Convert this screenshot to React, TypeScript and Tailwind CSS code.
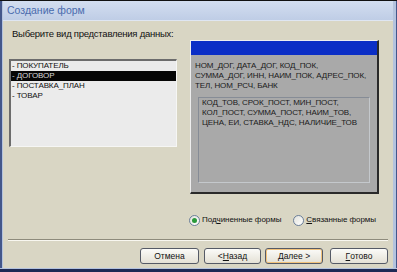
import React from "react";

const font = { fontFamily: '"Liberation Sans", Arial, sans-serif' };

function Radio({ checked, children }: { checked?: boolean; children: React.ReactNode }) {
  return (
    <div className="flex items-center gap-[2px] whitespace-nowrap">
      <div className="w-[11px] h-[11px] rounded-full border border-[#6b7f9a] bg-gradient-to-br from-[#e2e2dc] to-[#ffffff] flex items-center justify-center">
        {checked && <div className="w-[5px] h-[5px] rounded-full bg-[#2a9a3a]" />}
      </div>
      <span className="text-[8px] leading-[12px] text-[#111] tracking-[-0.05px]">{children}</span>
    </div>
  );
}

function Btn({ children, w, def }: { children: React.ReactNode; w: string; def?: boolean }) {
  return (
    <div
      className={`${w} h-[16px] rounded-[3px] border border-[#555a66] bg-gradient-to-b from-[#fbfbf8] to-[#e4e1d6] flex items-center justify-center whitespace-nowrap text-[8.5px] leading-[12px] text-[#111] ${
        def ? "shadow-[inset_0_0_0_1px_#f2c27a]" : ""
      }`}
    >
      {children}
    </div>
  );
}

export default function App() {
  return (
    <div style={font} className="w-[397px] h-[272px] bg-[#1e2a55] flex flex-col overflow-hidden">
      <div className="h-[1px] bg-[#111]" />
      <div className="flex-1 flex">
        <div className="w-[2px] bg-[#44578a]" />
        <div className="w-[1px] bg-[#b4c3de]" />
        <div className="flex-1 flex flex-col">
          <div className="h-[20px] bg-gradient-to-b from-[#d3def0] to-[#bfcde6] flex items-center pl-[4px] border-b border-[#dfe6f2]">
            <span className="text-[10.5px] leading-[13px] text-[#4a6cae]">Создание форм</span>
          </div>
          <div className="flex-1 bg-[#d9d6c4] flex flex-col">
            <div className="mt-[6px] ml-[9px] text-[9.5px] leading-[13px] text-[#111] tracking-[-0.25px] whitespace-nowrap">
              Выберите вид представления данных:
            </div>
            <div className="flex items-start">
              <div className="ml-[6px] mt-[19px] w-[168px] h-[88px] bg-[#ebebeb] border-t-2 border-l-2 border-[#6c6c6c] border-r border-b border-r-[#f6f6f4] border-b-[#f6f6f4] text-[8px] leading-[10px] text-[#111] tracking-[-0.1px]">
                <div className="pl-[1px]">- ПОКУПАТЕЛЬ</div>
                <div className="pl-[1px] bg-[#050505] text-[#d8d8d8]">- ДОГОВОР</div>
                <div className="pl-[1px]">- ПОСТАВКА_ПЛАН</div>
                <div className="pl-[1px]">- ТОВАР</div>
              </div>
              <div className="ml-[13px] w-[189px] h-[154px] bg-[#a9a9a9] border-t border-l border-[#eeeeee] border-r-2 border-b-2 border-r-[#2a2a2a] border-b-[#2a2a2a] flex flex-col">
                <div className="h-[14px] bg-[#0b2ec6]" />
                <div className="mt-[6px] pl-[4px] text-[8px] leading-[10px] text-[#1a1a1a] tracking-[-0.1px] whitespace-nowrap">
                  <div>НОМ_ДОГ, ДАТА_ДОГ, КОД_ПОК,</div>
                  <div>СУММА_ДОГ, ИНН, НАИМ_ПОК, АДРЕС_ПОК,</div>
                  <div>ТЕЛ, НОМ_РСЧ, БАНК</div>
                </div>
                <div className="mt-[6px] ml-[7px] w-[172px] h-[86px] border border-[#868c96] border-b-[#c4c8cc] border-r-[#c4c8cc] pl-[3px] text-[8px] leading-[10px] text-[#1a1a1a] tracking-[-0.1px] whitespace-nowrap">
                  <div>КОД_ТОВ, СРОК_ПОСТ, МИН_ПОСТ,</div>
                  <div>КОЛ_ПОСТ, СУММА_ПОСТ, НАИМ_ТОВ,</div>
                  <div>ЦЕНА, ЕИ, СТАВКА_НДС, НАЛИЧИЕ_ТОВ</div>
                </div>
              </div>
            </div>
            <div className="mt-[20px] flex items-center h-[12px]">
              <div className="ml-[186px]">
                <Radio checked>
                  Под<span className="underline">ч</span>иненные формы
                </Radio>
              </div>
              <div className="ml-[12px]">
                <Radio>
                  <span className="underline">С</span>вязанные формы
                </Radio>
              </div>
            </div>
            <div className="mt-[13px] mx-[5px] border-t border-[#8e8b7c] border-b border-b-[#f8f7f0]" />
            <div className="mt-[7px] flex">
              <div className="ml-[137px]">
                <Btn w="w-[59px]">Отмена</Btn>
              </div>
              <div className="ml-[5px]">
                <Btn w="w-[57px]">
                  &lt; <span className="underline">Н</span>азад
                </Btn>
              </div>
              <div className="ml-[4px]">
                <Btn w="w-[58px]" def>
                  <span className="underline">Д</span>алее &gt;
                </Btn>
              </div>
              <div className="ml-[7px]">
                <Btn w="w-[58px]">
                  <span className="underline">Г</span>отово
                </Btn>
              </div>
            </div>
          </div>
        </div>
        <div className="w-[3px] bg-[#b4c3de]" />
        <div className="w-[1px] bg-[#44578a]" />
      </div>
      <div className="h-[1px] bg-[#b4c3de]" />
      <div className="h-[3px] bg-[#1e2a55]" />
    </div>
  );
}
